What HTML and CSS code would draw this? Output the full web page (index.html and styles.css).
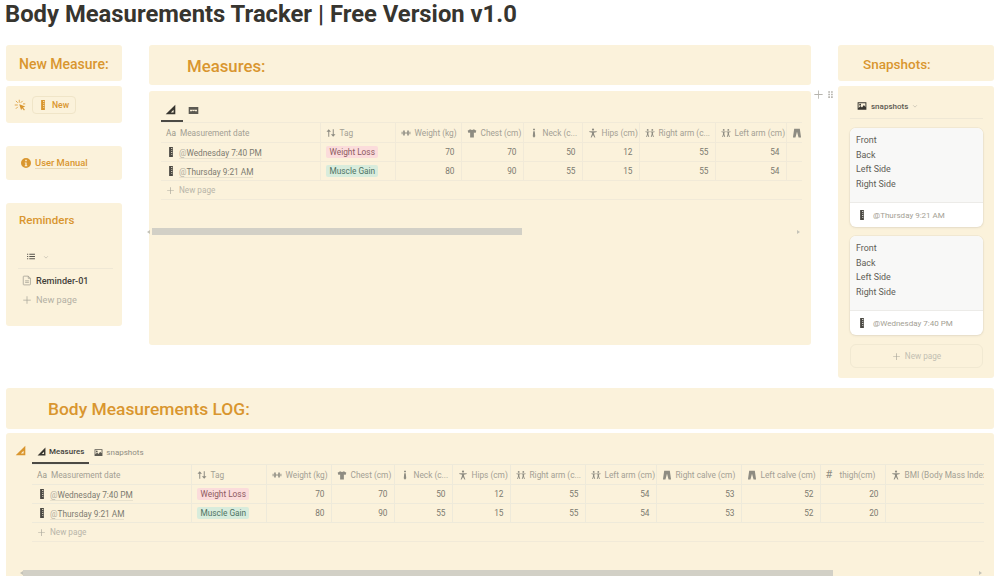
FILE: index.html
```html
<!DOCTYPE html>
<html lang="en">
<head>
    <meta charset="UTF-8">
    <meta name="viewport" content="width=device-width, initial-scale=1.0">
    <title>Body Measurements Tracker</title>
    <link rel="stylesheet" href="styles.css">
</head>
<body>
    <!-- Shared icons -->
    <svg class="sprite" xmlns="http://www.w3.org/2000/svg">
        <symbol id="i-square" viewBox="0 0 16 16"><path fill-rule="evenodd" d="M1 15 15 1v14zM8.500 12.500H12.500V8.500z"/></symbol>
        <symbol id="i-ruler" viewBox="0 0 16 16"><path fill-rule="evenodd" d="M5 0h6v16H5zM8 2v1h2V2zM8 5v1h2V5zM8 8v1h2V8zM8 11v1h2v-1z"/></symbol>
        <symbol id="i-image" viewBox="0 0 16 16"><path fill-rule="evenodd" d="M1 2h14v12H1zM2.500 3.500v7.500l3-3 2.500 2.500 3-4 2.500 3V3.500zM5 4.500a1.500 1.500 0 1 1 0 3 1.500 1.500 0 0 1 0-3z"/></symbol>
        <symbol id="i-banner" viewBox="0 0 16 16"><path fill-rule="evenodd" d="M1 3h14v10H1zM3 7v2h2.500l1-1 1.500 1 1.500-1 1 1H13V7z"/></symbol>
        <symbol id="i-shirt" viewBox="0 0 16 16"><path d="M5 2 1 4.500 2.500 8 5 7v8h6V7l2.500 1L15 4.500 11 2Q8 4 5 2z"/></symbol>
        <symbol id="i-tie" viewBox="0 0 16 16"><path d="M6.500 1h3v2.500h-3zM6.800 5h2.400L10 13l-2 2.500L6 13z"/></symbol>
        <symbol id="i-person" viewBox="0 0 16 16"><circle cx="8" cy="2.500" r="1.800"/><path d="M2 5h12v1.300L9.500 7.500 9.800 10l2 5h-1.500L8 11l-2.300 4H4.200l2-5 .3-2.500L2 6.300z"/></symbol>
        <symbol id="i-people" viewBox="0 0 16 16"><circle cx="4.300" cy="3" r="1.500"/><circle cx="11.700" cy="3" r="1.500"/><path d="M.5 5.500h7.200v1L5.300 7.300l.2 3 1.300 4.200H5.500L4.300 11l-1.200 3.500H1.800l1.300-4.200.2-3L.5 6.500zM8.300 5.500h7.200v1l-2.800.8.200 3 1.300 4.200h-1.300L11.700 11l-1.200 3.500H9.200l1.300-4.200.2-3-2.400-.8z"/></symbol>
        <symbol id="i-pants" viewBox="0 0 16 16"><path d="M3.500 1h9l2 14h-4L8 6l-2.500 9h-4z"/></symbol>
        <symbol id="i-dumbbell" viewBox="0 0 16 16"><path d="M1 6h1.500v4H1zM3.500 4H6v8H3.500zM6 7.200h4v1.600H6zM10 4h2.500v8H10zM13.500 6H15v4h-1.500z"/></symbol>
        <symbol id="i-sort" viewBox="0 0 16 16"><path d="M4.300 2 8 6H5.200v8H3.600V6H.8zM10.800 2h1.600v8h2.800l-3.700 4-3.700-4h3z"/></symbol>
        <symbol id="i-list" viewBox="0 0 16 16"><path d="M1 3h2v2H1zM5 3.300h10v1.400H5zM1 7h2v2H1zM5 7.300h10v1.400H5zM1 11h2v2H1zM5 11.300h10v1.400H5z"/></symbol>
        <symbol id="i-doc" viewBox="0 0 16 16"><path fill="none" stroke="currentColor" stroke-width="1.200" d="M3 1h7l3.500 3.500V14a1 1 0 0 1-1 1h-9.500a1 1 0 0 1-1-1V2a1 1 0 0 1 1-1zM10 1v3.500h3.500M5 8.500h6M5 11h6"/></symbol>
        <symbol id="i-info" viewBox="0 0 16 16"><path fill-rule="evenodd" d="M8 0a8 8 0 1 1 0 16A8 8 0 0 1 8 0zM6.800 2.800v2.400h2.400V2.800zM6 7v1.300h1v3.200H6V13h4v-1.500H9V7z"/></symbol>
        <symbol id="i-click" viewBox="0 0 16 16"><path d="M7 7 15 10l-3 1.200 2.500 3-1.200 1-2.500-3L9.500 15z"/><path fill="none" stroke="currentColor" stroke-width="1.100" d="M7 1v4M2.500 2.500l2.500 2.500M1 8h4M2.500 13l2.500-2.500M11.500 2.500 9 5M15 6.500h-3"/></symbol>
        <symbol id="i-plus" viewBox="0 0 16 16"><path d="M7.400 2h1.200v5.400H14v1.200H8.600V14H7.400V8.600H2V7.400h5.400z"/></symbol>
        <symbol id="i-grip" viewBox="0 0 16 16"><path d="M4 2h3v3H4zM9 2h3v3H9zM4 6.500h3v3H4zM9 6.500h3v3H9zM4 11h3v3H4zM9 11h3v3H9z"/></symbol>
        <symbol id="i-chevron" viewBox="0 0 16 16"><path fill="none" stroke="currentColor" stroke-width="1.600" d="M3 6l5 5 5-5"/></symbol>
    </svg>

    <div class="page">
        <h1 class="title">Body Measurements Tracker | Free Version v1.0</h1>

        <div class="columns">
            <!-- Left column -->
            <div class="side">
                <div class="card card-head-small">
                    <h3 class="heading-small">New Measure:</h3>
                </div>
                <div class="card card-new">
                    <svg class="icon click-icon"><use href="#i-click"/></svg>
                    <span class="new-button">
                        <svg class="icon ruler-orange"><use href="#i-ruler"/></svg>
                        New
                    </span>
                </div>
                <div class="card card-manual">
                    <svg class="icon info-icon"><use href="#i-info"/></svg>
                    <span class="manual-link">User Manual</span>
                </div>
                <div class="card card-reminders">
                    <h3 class="heading-reminders">Reminders</h3>
                    <div class="list-view">
                        <svg class="icon list-icon"><use href="#i-list"/></svg>
                        <svg class="icon chevron"><use href="#i-chevron"/></svg>
                    </div>
                    <div class="reminder-row">
                        <svg class="icon doc-icon"><use href="#i-doc"/></svg>
                        <span>Reminder-01</span>
                    </div>
                    <div class="reminder-new">
                        <svg class="icon plus-big"><use href="#i-plus"/></svg>
                        <span>New page</span>
                    </div>
                </div>
            </div>

            <!-- Middle column -->
            <div class="middle">
                <div class="card card-head-large">
                    <h2 class="heading-large measures-title">Measures:</h2>
                </div>
                <div class="block-handle">
                    <svg class="icon handle-plus"><use href="#i-plus"/></svg>
                    <svg class="icon handle-grip"><use href="#i-grip"/></svg>
                </div>
                <div class="card card-measures">
                    <div class="tabs tabs-icons">
                        <span class="tab tab-active">
                            <svg class="icon tab-icon"><use href="#i-square"/></svg>
                        </span>
                        <span class="tab">
                            <svg class="icon tab-icon tab-icon-muted"><use href="#i-banner"/></svg>
                        </span>
                    </div>
                    <div class="table-wrap table-wrap-top">
                        <table class="db-table db-table-top">
                            <colgroup>
                                <col class="c-date"><col class="c-tag"><col class="c-weight"><col class="c-chest"><col class="c-neck"><col class="c-hips"><col class="c-rarm"><col class="c-larm"><col class="c-rcalve">
                            </colgroup>
                            <thead>
                                <tr>
                                    <th><span class="aa">Aa</span>Measurement date</th>
                                    <th><svg class="icon th-icon"><use href="#i-sort"/></svg>Tag</th>
                                    <th><svg class="icon th-icon"><use href="#i-dumbbell"/></svg>Weight (kg)</th>
                                    <th><svg class="icon th-icon"><use href="#i-shirt"/></svg>Chest (cm)</th>
                                    <th><svg class="icon th-icon"><use href="#i-tie"/></svg>Neck (c...</th>
                                    <th><svg class="icon th-icon"><use href="#i-person"/></svg>Hips (cm)</th>
                                    <th><svg class="icon th-icon"><use href="#i-people"/></svg>Right arm (c...</th>
                                    <th><svg class="icon th-icon"><use href="#i-people"/></svg>Left arm (cm)</th>
                                    <th><svg class="icon th-icon"><use href="#i-pants"/></svg></th>
                                </tr>
                            </thead>
                            <tbody>
                                <tr>
                                    <td class="date-cell"><svg class="icon ruler"><use href="#i-ruler"/></svg><span class="date-link"><i>@</i>Wednesday 7:40 PM</span></td>
                                    <td><span class="tag tag-loss">Weight Loss</span></td>
                                    <td class="num">70</td><td class="num">70</td><td class="num">50</td><td class="num">12</td><td class="num">55</td><td class="num">54</td><td class="num"></td>
                                </tr>
                                <tr>
                                    <td class="date-cell"><svg class="icon ruler"><use href="#i-ruler"/></svg><span class="date-link"><i>@</i>Thursday 9:21 AM</span></td>
                                    <td><span class="tag tag-gain">Muscle Gain</span></td>
                                    <td class="num">80</td><td class="num">90</td><td class="num">55</td><td class="num">15</td><td class="num">55</td><td class="num">54</td><td class="num"></td>
                                </tr>
                            </tbody>
                        </table>
                        <div class="new-row"><svg class="icon plus"><use href="#i-plus"/></svg>New page</div>
                    </div>
                    <div class="scrollbar scrollbar-top">
                        <span class="arrow arrow-left"></span>
                        <div class="thumb thumb-top"></div>
                        <span class="arrow arrow-right"></span>
                    </div>
                </div>
            </div>

            <!-- Right column -->
            <div class="side">
                <div class="card card-head-small">
                    <h3 class="heading-small snapshots-title">Snapshots:</h3>
                </div>
                <div class="card card-snapshots">
                    <div class="gallery-view">
                        <svg class="icon gallery-icon"><use href="#i-image"/></svg>
                        <span>snapshots</span>
                        <svg class="icon chevron"><use href="#i-chevron"/></svg>
                    </div>
                    <div class="snap">
                        <div class="snap-body">
                            <p>Front</p><p>Back</p><p>Left Side</p><p>Right Side</p>
                        </div>
                        <div class="snap-foot">
                            <svg class="icon ruler"><use href="#i-ruler"/></svg>
                            <span>@Thursday 9:21 AM</span>
                        </div>
                    </div>
                    <div class="snap">
                        <div class="snap-body">
                            <p>Front</p><p>Back</p><p>Left Side</p><p>Right Side</p>
                        </div>
                        <div class="snap-foot">
                            <svg class="icon ruler"><use href="#i-ruler"/></svg>
                            <span>@Wednesday 7:40 PM</span>
                        </div>
                    </div>
                    <div class="snap-new"><svg class="icon plus"><use href="#i-plus"/></svg>New page</div>
                </div>
            </div>
        </div>

        <!-- Log -->
        <div class="card card-log-head">
            <h2 class="heading-large log-title">Body Measurements LOG:</h2>
        </div>
        <div class="card card-log">
            <svg class="icon log-icon"><use href="#i-square"/></svg>
            <div class="log-body">
                <div class="tabs">
                    <span class="tab tab-active tab-text">
                        <svg class="icon tab-icon"><use href="#i-square"/></svg>Measures
                    </span>
                    <span class="tab tab-text tab-muted">
                        <svg class="icon tab-icon tab-icon-outline"><use href="#i-image"/></svg>snapshots
                    </span>
                </div>
                <div class="table-wrap table-wrap-log">
                    <table class="db-table db-table-log">
                        <colgroup>
                            <col class="l-date"><col class="l-tag"><col class="l-weight"><col class="l-chest"><col class="l-neck"><col class="l-hips"><col class="l-rarm"><col class="l-larm"><col class="l-rcalve"><col class="l-lcalve"><col class="l-thigh"><col class="l-bmi">
                        </colgroup>
                        <thead>
                            <tr>
                                <th><span class="aa">Aa</span>Measurement date</th>
                                <th><svg class="icon th-icon"><use href="#i-sort"/></svg>Tag</th>
                                <th><svg class="icon th-icon"><use href="#i-dumbbell"/></svg>Weight (kg)</th>
                                <th><svg class="icon th-icon"><use href="#i-shirt"/></svg>Chest (cm)</th>
                                <th><svg class="icon th-icon"><use href="#i-tie"/></svg>Neck (c...</th>
                                <th><svg class="icon th-icon"><use href="#i-person"/></svg>Hips (cm)</th>
                                <th><svg class="icon th-icon"><use href="#i-people"/></svg>Right arm (c...</th>
                                <th><svg class="icon th-icon"><use href="#i-people"/></svg>Left arm (cm)</th>
                                <th><svg class="icon th-icon"><use href="#i-pants"/></svg>Right calve (cm)</th>
                                <th><svg class="icon th-icon"><use href="#i-pants"/></svg>Left calve (cm)</th>
                                <th><span class="hash">#</span>thigh(cm)</th>
                                <th><svg class="icon th-icon"><use href="#i-person"/></svg>BMI (Body Mass Index)</th>
                            </tr>
                        </thead>
                        <tbody>
                            <tr>
                                <td class="date-cell"><svg class="icon ruler"><use href="#i-ruler"/></svg><span class="date-link"><i>@</i>Wednesday 7:40 PM</span></td>
                                <td><span class="tag tag-loss">Weight Loss</span></td>
                                <td class="num">70</td><td class="num">70</td><td class="num">50</td><td class="num">12</td><td class="num">55</td><td class="num">54</td><td class="num">53</td><td class="num">52</td><td class="num">20</td><td class="num">20.7</td>
                            </tr>
                            <tr>
                                <td class="date-cell"><svg class="icon ruler"><use href="#i-ruler"/></svg><span class="date-link"><i>@</i>Thursday 9:21 AM</span></td>
                                <td><span class="tag tag-gain">Muscle Gain</span></td>
                                <td class="num">80</td><td class="num">90</td><td class="num">55</td><td class="num">15</td><td class="num">55</td><td class="num">54</td><td class="num">53</td><td class="num">52</td><td class="num">20</td><td class="num">13.88</td>
                            </tr>
                        </tbody>
                    </table>
                    <div class="new-row"><svg class="icon plus"><use href="#i-plus"/></svg>New page</div>
                </div>
            </div>
            <div class="scrollbar scrollbar-log">
                <span class="arrow arrow-left"></span>
                <div class="thumb thumb-log"></div>
                <span class="arrow arrow-right"></span>
            </div>
        </div>
    </div>
</body>
</html>
```

FILE: styles.css
```css
/* Basic Styling */
html, body {
    margin: 0;
    padding: 0;
    height: 100%;
    overflow: hidden;
    background-color: #ffffff;
}

body {
    font-family: Roboto, "Open Sans", Arial, sans-serif;
    font-size: 10px;
    color: #37352f;
}

.sprite {
    display: none;
}

.icon {
    display: block;
    flex: none;
    fill: currentColor;
}

.page {
    width: 999px;
    height: 586px;
    padding-left: 6px;
    overflow: hidden;
}

h1, h2, h3, p {
    margin: 0;
}

.title {
    height: 45px;
    margin-left: -1px;
    font-size: 23.800px;
    line-height: 29px;
    font-weight: 700;
    color: #37352f;
    white-space: nowrap;
}

.columns {
    display: grid;
    grid-template-columns: 116px 662px 156px;
    column-gap: 27px;
    height: 333px;
}

.card {
    background-color: #fbf2db;
    border-radius: 3px;
}

.side, .middle {
    display: flex;
    flex-direction: column;
    align-items: stretch;
}

.middle {
    position: relative;
}

/* Headings */
.heading-small {
    font-size: 14px;
    line-height: 20px;
    font-weight: 500;
    color: #d9962f;
    white-space: nowrap;
}

.heading-reminders {
    font-size: 11.500px;
    line-height: 20px;
    font-weight: 500;
    color: #d9962f;
    white-space: nowrap;
}

.heading-large {
    font-size: 17.400px;
    line-height: 24px;
    font-weight: 500;
    color: #d9962f;
    white-space: nowrap;
}

.measures-title {
    font-size: 16.800px;
}

.card-head-small {
    height: 36px;
    padding: 9px 0 0 13px;
    box-sizing: border-box;
}

.snapshots-title {
    padding-left: 12px;
    font-size: 13.500px;
}

.card-head-large {
    height: 40px;
    padding: 9px 0 0 38px;
    box-sizing: border-box;
}

/* Left column */
.card-new {
    display: flex;
    align-items: center;
    height: 37px;
    margin-top: 5px;
    padding-left: 8px;
    box-sizing: border-box;
}

.click-icon {
    width: 12px;
    height: 12px;
    color: #d9962f;
    margin-right: 6px;
}

.new-button {
    display: flex;
    align-items: center;
    height: 18px;
    width: 44px;
    box-sizing: border-box;
    padding-left: 7px;
    border: 1px solid #f0e5c8;
    border-radius: 4px;
    font-size: 8.600px;
    font-weight: 500;
    color: #d9962f;
}

.ruler-orange {
    width: 10px;
    height: 12px;
    color: #d9962f;
    margin-right: 4px;
    margin-left: -2px;
}

.card-manual {
    display: flex;
    align-items: center;
    height: 34px;
    margin-top: 23px;
    padding-left: 15px;
    box-sizing: border-box;
}

.info-icon {
    width: 10px;
    height: 10px;
    color: #d9962f;
    margin-right: 4px;
}

.manual-link {
    font-size: 9.400px;
    font-weight: 500;
    color: #d9962f;
    border-bottom: 1px solid #ead9b3;
}

.card-reminders {
    height: 123px;
    margin-top: 23px;
    padding: 7px 9px 0 13px;
    box-sizing: border-box;
}

.list-view {
    display: flex;
    align-items: center;
    height: 29px;
    margin: 10px 0 0 -1px;
    padding: 11px 0 6px 8px;
    box-sizing: border-box;
    border-bottom: 1px solid #efe8d5;
    color: #55534c;
    gap: 7px;
}

.list-icon {
    width: 10px;
    height: 9px;
}

.list-view .chevron {
    color: #b3b0a4;
}

.chevron {
    width: 6px;
    height: 6px;
}

.reminder-row {
    display: flex;
    align-items: center;
    height: 19px;
    margin-top: 2px;
    padding-left: 3px;
    font-size: 9.100px;
    font-weight: 500;
    color: #44423b;
}

.doc-icon {
    width: 10px;
    height: 11px;
    color: #a09d92;
    margin-right: 4px;
}

.reminder-new {
    display: flex;
    align-items: center;
    height: 19px;
    padding-left: 3px;
    font-size: 9.200px;
    color: #b3b0a4;
}

.plus-big {
    width: 10px;
    height: 10px;
    color: #aaa79b;
    margin-right: 4px;
}

/* Middle column */
.block-handle {
    position: absolute;
    top: 44px;
    right: -24px;
    display: flex;
    align-items: center;
    gap: 2px;
    color: #b5b3ad;
}

.handle-plus {
    width: 11px;
    height: 11px;
}

.handle-grip {
    width: 9px;
    height: 9px;
}

.card-measures {
    height: 254px;
    margin-top: 6px;
    padding: 8px 0 0 12px;
    box-sizing: border-box;
}

.tabs {
    display: flex;
    height: 23px;
    align-items: stretch;
}

.tab {
    display: flex;
    align-items: center;
    padding: 0 5px;
    box-sizing: border-box;
}

.tab-active {
    border-bottom: 2px solid #4c4a44;
}

.tabs-icons .tab-active {
    width: 22px;
    padding-left: 4px;
}

.tab-icon {
    width: 11px;
    height: 11px;
    color: #37352f;
}

.tab-icon-muted {
    color: #5c5a52;
}

.tab-text {
    font-size: 8px;
    font-weight: 500;
    color: #44423b;
}

.tab-text .tab-icon {
    width: 9px;
    margin-right: 3px;
}

.tab-muted {
    font-weight: 400;
    color: #8f8d82;
}

.tab-icon-outline {
    color: #5c5a52;
}

/* Database tables */
.table-wrap {
    overflow: hidden;
}

.table-wrap-top {
    width: 641px;
}

.table-wrap-log {
    width: 952px;
}

.db-table {
    border-collapse: collapse;
    table-layout: fixed;
}

.db-table-top {
    width: 641px;
}

.db-table-log {
    width: 979px;
}

.db-table th,
.db-table td {
    height: 19px;
    box-sizing: border-box;
    padding: 0 6px 0 5px;
    border: 1px solid #f1ead8;
    font-size: 8.300px;
    white-space: nowrap;
    overflow: hidden;
}

.db-table tr > :first-child {
    border-left: none;
}

.db-table th {
    height: 20px;
    font-weight: 400;
    text-align: left;
    color: #a3a094;
}

.db-table th:last-child,
.db-table td:last-child {
    border-right: none;
}

.table-wrap .th-icon {
    display: inline-block;
    width: 10px;
    height: 10px;
    margin-right: 4px;
    vertical-align: -2px;
    color: #8e8c82;
}

.aa {
    margin-right: 4px;
    color: #9a978b;
}

.hash {
    display: inline-block;
    width: 10px;
    margin-right: 4px;
    font-size: 11px;
    line-height: 9px;
    color: #8e8c82;
}

.num {
    text-align: right;
    color: #7c7a70;
}

.date-cell {
    color: #7c7a70;
}

.date-cell .ruler {
    display: inline-block;
    vertical-align: -2px;
    margin: 0 3px 0 0;
}

.ruler {
    width: 10px;
    height: 12px;
    color: #4a4842;
}

.date-link {
    border-bottom: 1px solid #e8e1cd;
}

.date-link i {
    font-style: normal;
    color: #b0ada1;
}

.tag {
    display: inline-block;
    padding: 0 3px 0 4px;
    line-height: 12px;
    border-radius: 2px;
}

.tag-loss {
    background-color: #fbdcdb;
    color: #8d5a60;
}

.tag-gain {
    background-color: #d8ecdc;
    color: #4e7363;
}

.new-row {
    display: flex;
    align-items: center;
    height: 19px;
    padding-left: 5px;
    box-sizing: border-box;
    border-bottom: 1px solid #f1ead8;
    font-size: 8.200px;
    color: #b8b5a9;
}

.plus {
    width: 9px;
    height: 9px;
    color: #aaa79b;
    margin-right: 4px;
}

/* Top table columns */
.c-date { width: 159px; }
.c-tag { width: 75px; }
.c-weight { width: 66px; }
.c-chest { width: 62px; }
.c-neck { width: 59px; }
.c-hips { width: 57px; }
.c-rarm { width: 76px; }
.c-larm { width: 71px; }
.c-rcalve { width: 16px; }

/* Log table columns */
.l-date { width: 159px; }
.l-tag { width: 75px; }
.l-weight { width: 65px; }
.l-chest { width: 63px; }
.l-neck { width: 58px; }
.l-hips { width: 58px; }
.l-rarm { width: 75px; }
.l-larm { width: 71px; }
.l-rcalve { width: 85px; }
.l-lcalve { width: 79px; }
.l-thigh { width: 65px; }
.l-bmi { width: 126px; }

/* Scrollbars */
.scrollbar {
    display: flex;
    align-items: center;
}

.scrollbar-top {
    height: 7px;
    margin: 28px 0 0 -14px;
}

.thumb {
    height: 100%;
    background-color: #d2d0c6;
}

.thumb-top {
    width: 370px;
    margin-left: 2px;
}

.arrow {
    flex: none;
    width: 0;
    height: 0;
    border-top: 2px solid transparent;
    border-bottom: 2px solid transparent;
}

.arrow-left {
    border-right: 3px solid #c5c3b8;
}

.arrow-right {
    border-left: 3px solid #c5c3b8;
    margin-left: 275px;
}

/* Snapshots */
.card-snapshots {
    height: 292px;
    margin-top: 5px;
    padding: 0 11px 0 12px;
    box-sizing: border-box;
}

.gallery-view {
    display: flex;
    align-items: center;
    height: 33px;
    padding: 8px 0 0 7px;
    box-sizing: border-box;
    border-bottom: 1px solid #efe8d5;
    font-size: 8px;
    font-weight: 500;
    color: #5c5a52;
}

.gallery-icon {
    width: 10px;
    height: 10px;
    color: #37352f;
    margin-right: 4px;
}

.gallery-view .chevron {
    margin-left: 4px;
    color: #b3b0a4;
}

.snap {
    height: 99px;
    margin-top: 9px;
    background-color: #ffffff;
    border-radius: 6px;
    box-shadow: 0 0 0 1px rgba(55, 53, 47, 0.04), 0 1px 3px rgba(55, 53, 47, 0.08);
    overflow: hidden;
}

.snap-body {
    height: 75px;
    padding: 5px 0 0 6px;
    box-sizing: border-box;
    background-color: #f8f8f7;
    border-bottom: 1px solid #ecebe8;
    font-size: 8.900px;
    line-height: 14.700px;
    color: #5f5d56;
}

.snap-foot {
    display: flex;
    align-items: center;
    height: 24px;
    padding-left: 7px;
    font-size: 8px;
    color: #a3a094;
}

.snap-foot .ruler {
    margin-right: 6px;
}

.snap-new {
    display: flex;
    align-items: center;
    justify-content: center;
    height: 24px;
    margin-top: 9px;
    border: 1px solid #f1e9d2;
    border-radius: 6px;
    box-sizing: border-box;
    font-size: 8.200px;
    color: #c2bfb2;
}

/* Log section */
.card-log-head {
    width: 988px;
    height: 41px;
    margin-top: 10px;
    padding: 9px 0 0 42px;
    box-sizing: border-box;
}

.card-log {
    display: grid;
    grid-template-columns: 26px 1fr;
    grid-template-rows: 1fr 6px;
    width: 988px;
    height: 143px;
    margin-top: 4px;
    box-sizing: border-box;
    border-radius: 3px 3px 0 0;
}

.log-icon {
    width: 11px;
    height: 11px;
    margin: 12px 0 0 9px;
    color: #d9962f;
}

.log-body {
    padding-top: 8px;
    min-width: 0;
}

.db-table-log th,
.db-table-log td {
    border-color: #eeeada;
}

.scrollbar-log {
    grid-column: 1 / 3;
    height: 6px;
    padding-left: 14px;
}

.thumb-log {
    width: 810px;
    margin-left: 0;
}

.scrollbar-log .arrow-right {
    margin-left: 146px;
}
```
